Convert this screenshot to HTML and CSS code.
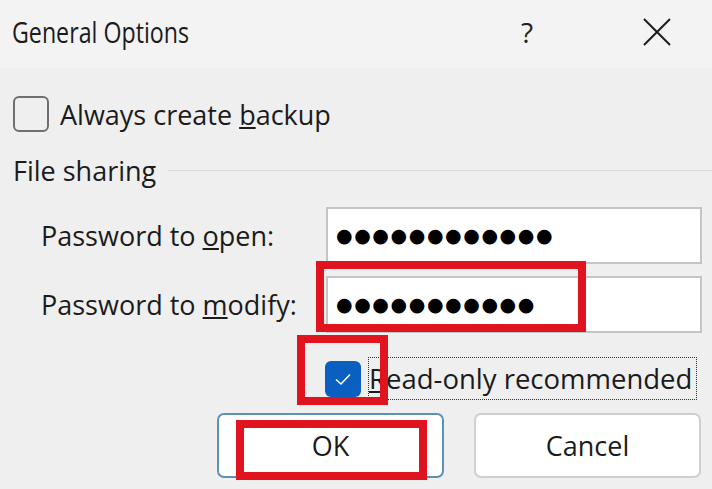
FILE: index.html
```html
<!DOCTYPE html>
<html>
<head>
<meta charset="utf-8">
<link rel="stylesheet" href="styles.css">
</head>
<body>
<div class="dialog">
  <div class="titlebar">
    <span class="title-wrap"><span class="title">General Options</span></span>
    <span class="help">?</span>
    <span class="close">
      <svg width="30" height="30" viewBox="0 0 30 30"><path d="M2 2 L28 28 M28 2 L2 28" stroke="#1c1c1c" stroke-width="2" fill="none"/></svg>
    </span>
  </div>
  <div class="body">
    <div class="check-row">
      <span class="box"></span>
      <span class="label">Always create <u>b</u>ackup</span>
    </div>
    <div class="group">
      <span class="group-title">File sharing</span>
      <span class="group-line"></span>
    </div>
    <div class="field-row first">
      <span class="field-label">Password to <u>o</u>pen:</span>
      <div class="input"><span class="dots">●●●●●●●●●●●●</span></div>
    </div>
    <div class="field-row second">
      <span class="field-label">Password to <u>m</u>odify:</span>
      <div class="input"><span class="dots">●●●●●●●●●●●</span></div>
      <span class="mark mark-modify"></span>
    </div>
    <div class="readonly-row">
      <span class="box checked">
        <svg width="20" height="16" viewBox="0 0 20 16"><path d="M3 8.5 L8 13 L17 3.5" stroke="#fff" stroke-width="1.6" fill="none"/></svg>
      </span>
      <span class="focus"><u>R</u>ead-only recommended</span>
      <span class="mark mark-check"></span>
    </div>
    <div class="buttons">
      <button class="btn primary">OK</button>
      <button class="btn">Cancel</button>
      <span class="mark mark-ok"></span>
    </div>
  </div>
</div>
</body>
</html>
```
FILE: styles.css
```css
html, body {
  margin: 0;
  padding: 0;
}
body {
  width: 712px;
  height: 489px;
  overflow: hidden;
  background: #efefef;
  font-family: "Open Sans", "Noto Sans", sans-serif;
  color: #1b1b1b;
}
.dialog {
  position: relative;
  width: 712px;
  height: 489px;
}
.titlebar {
  height: 68px;
  background: #f3f3f3;
  display: flex;
  align-items: center;
  padding-left: 12px;
}
.title-wrap {
  flex: 1;
  margin-top: -6px;
}
.title {
  display: inline-block;
  font-size: 29px;
  transform: scaleX(0.8);
  transform-origin: left center;
}
.help {
  font-size: 28px;
  width: 30px;
  margin-right: 91px;
  margin-top: -5px;
  color: #222;
}
.close {
  width: 30px;
  height: 30px;
  margin-right: 40px;
  margin-top: -5px;
  display: flex;
}
.body {
  position: relative;
}
.check-row {
  display: flex;
  align-items: center;
  margin-top: 28px;
  margin-left: 13px;
  height: 36px;
}
.box {
  width: 32px;
  height: 32px;
  border: 2px solid #6f6f6f;
  border-radius: 6px;
  box-sizing: content-box;
  display: flex;
  align-items: center;
  justify-content: center;
  flex: none;
}
.label {
  font-size: 27px;
  margin-left: 11px;
}
.group {
  display: flex;
  align-items: center;
  margin-top: 20px;
  margin-left: 13px;
  height: 36px;
}
.group-title {
  font-size: 27px;
}
.group-line {
  flex: 1;
  height: 1px;
  background: #d9d9d9;
  margin-left: 12px;
}
.field-row {
  position: relative;
  display: flex;
  align-items: center;
  margin-left: 41px;
  height: 57px;
}
.field-row.first {
  margin-top: 19px;
}
.field-row.second {
  margin-top: 12px;
}
.field-label {
  font-size: 27px;
  width: 285px;
  flex: none;
}
.input {
  width: 364px;
  height: 53px;
  background: #fff;
  border: 2px solid #c5c5c5;
  display: flex;
  align-items: center;
  padding-left: 8px;
  box-sizing: content-box;
}
.dots {
  font-family: "DejaVu Sans", sans-serif;
  font-size: 19px;
  letter-spacing: 1.6px;
  color: #000;
  margin-top: -2px;
}
.readonly-row {
  position: relative;
  display: flex;
  align-items: center;
  margin-top: 24px;
  margin-left: 325px;
  height: 43px;
}
.box.checked {
  width: 36px;
  height: 36px;
  border: none;
  background: #0b5fc1;
}
.focus {
  font-size: 27.5px;
  margin-left: 7px;
  height: 43px;
  width: 329px;
  border: 1px dotted #333;
  display: flex;
  align-items: center;
  box-sizing: border-box;
  white-space: nowrap;
  flex: none;
}
.buttons {
  position: relative;
  display: flex;
  margin-top: 13px;
  margin-left: 217px;
  gap: 30px;
}
.btn {
  width: 227px;
  height: 65px;
  background: #fff;
  border: 2px solid #cfcfcf;
  border-radius: 7px;
  font-family: "Open Sans", "Noto Sans", sans-serif;
  font-size: 27px;
  color: #1b1b1b;
  padding: 0;
}
.btn.primary {
  border-color: #5b93b8;
}
.mark {
  position: absolute;
  border: 8.5px solid #e0141e;
  box-sizing: border-box;
}
.mark-modify {
  left: 275px;
  top: -15px;
  width: 270px;
  height: 71px;
}
.mark-check {
  left: -28px;
  top: -22px;
  width: 91px;
  height: 70px;
}
.mark-ok {
  left: 19px;
  top: 7px;
  width: 191px;
  height: 60px;
}
```
